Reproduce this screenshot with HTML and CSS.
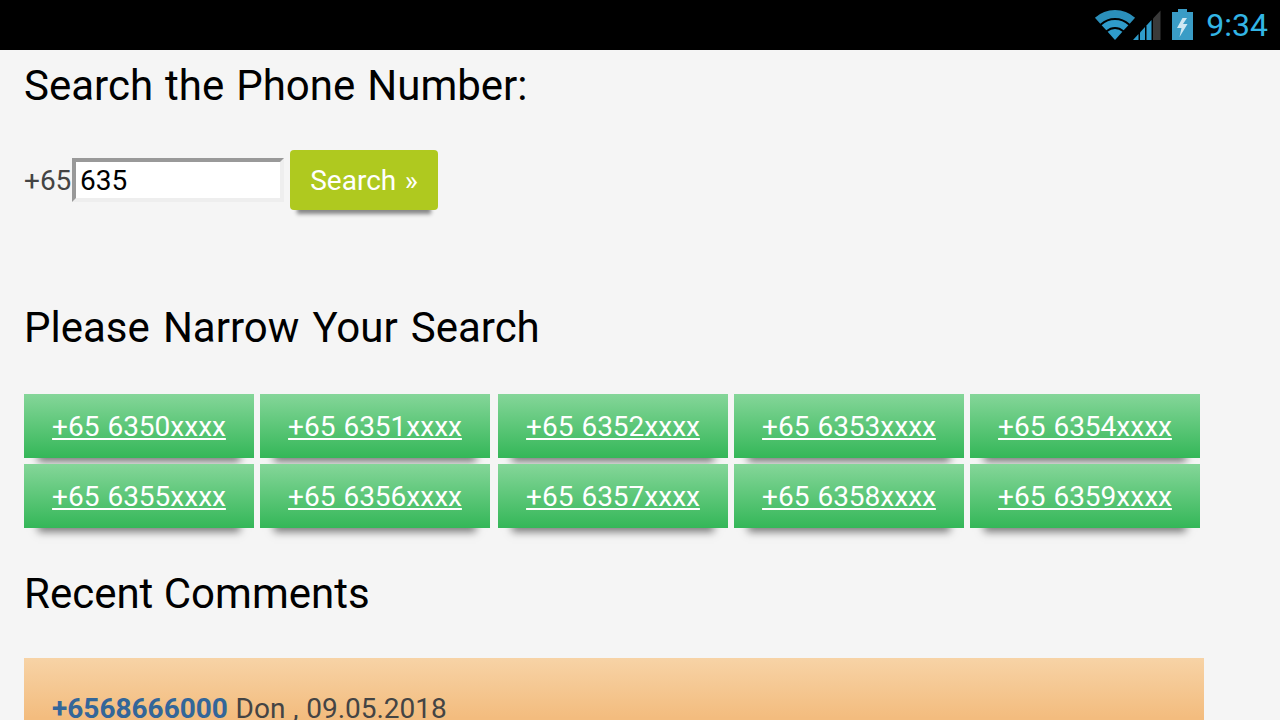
FILE: index.html
```html
<!DOCTYPE html>
<html>
<head>
  <meta charset="utf-8">
  <title>Search the Phone Number</title>
  <link rel="stylesheet" href="styles.css">
</head>
<body>

<!-- android status bar -->
<div class="status-bar">
  <svg class="icon-wifi" width="42" height="32" viewBox="0 0 42 32" fill="none">
    <path d="M21 31 L13.64 22.83 A11 11 0 0 1 28.36 22.83 Z" fill="#2f9ccb"/>
    <path d="M9.96 18.74 A16.5 16.5 0 0 1 32.04 18.74" stroke="#2f9ccb" stroke-width="7"/>
    <path d="M3.6 11.7 A26 26 0 0 1 38.4 11.7" stroke="#2b8fba" stroke-width="8"/>
  </svg>
  <svg class="icon-signal" width="28" height="32" viewBox="0 0 28 32">
    <path d="M0 31 L5.500 25 V31 Z" fill="#2f9ccb"/>
    <path d="M7 23.500 L12 18 V31 H7 Z" fill="#2f9ccb"/>
    <path d="M13.500 16.500 L18.500 11 V31 H13.500 Z" fill="#2f9ccb"/>
    <path d="M20 9.500 L27.500 1.500 V31 H20 Z" fill="#3a3a3a"/>
  </svg>
  <svg class="icon-battery" width="21" height="32" viewBox="0 0 21 32">
    <path d="M6 0 H15 V3 H21 V31 H0 V3 H6 Z" fill="#3a9cc6"/>
    <path d="M10.500 9 L5 19 H9.500 L7.500 28 L15.500 15 H11 L15 9 Z" fill="#cfe8f3"/>
  </svg>
  <span class="clock">9:34</span>
</div>

<div class="content">
  <h2 class="first">Search the Phone Number:</h2>

  <form class="search-form">
    <span class="prefix">+65</span>
    <input class="number-input" type="text" value="635">
    <a class="search-btn">Search »</a>
  </form>

  <h2 class="narrow-title">Please Narrow Your Search</h2>

  <div class="number-grid">
    <a class="number-btn" href="#">+65 6350xxxx</a>
    <a class="number-btn" href="#">+65 6351xxxx</a>
    <a class="number-btn wide-gap" href="#">+65 6352xxxx</a>
    <a class="number-btn" href="#">+65 6353xxxx</a>
    <a class="number-btn" href="#">+65 6354xxxx</a>
    <a class="number-btn" href="#">+65 6355xxxx</a>
    <a class="number-btn" href="#">+65 6356xxxx</a>
    <a class="number-btn wide-gap" href="#">+65 6357xxxx</a>
    <a class="number-btn" href="#">+65 6358xxxx</a>
    <a class="number-btn" href="#">+65 6359xxxx</a>
  </div>

  <h2 class="recent-title">Recent Comments</h2>

  <div class="comment-box">
    <a class="comment-number" href="#">+6568666000</a> Don , 09.05.2018
  </div>
</div>

</body>
</html>
```
FILE: styles.css
```css
html, body {
  margin: 0;
  height: 720px;
  overflow: hidden;
}

body {
  background-color: #f5f5f5;
  font-family: Roboto, sans-serif;
  color: #444444;
  word-spacing: 0.7px;
}

/* Status bar */
.status-bar {
  height: 50px;
  background-color: #000000;
  display: flex;
  align-items: center;
  justify-content: flex-end;
  padding-right: 12px;
}

.icon-wifi {
  margin-right: -3px;
}

.icon-signal {
  margin-right: 11px;
}

.icon-battery {
  margin-right: 13px;
}

.clock {
  font-size: 32px;
  color: #33b5e5;
}

/* Page content */
.content {
  padding: 0 24px;
}

h2 {
  margin: 0;
  font-size: 42px;
  font-weight: 400;
  line-height: 48px;
  color: #000000;
  word-spacing: 1.6px;
}

h2.first {
  padding-top: 12px;
}

.search-form {
  display: flex;
  align-items: center;
  margin-top: 40px;
  font-size: 28px;
}

.prefix {
  width: 48px;
  line-height: 44px;
  padding-top: 1px;
}

.number-input {
  box-sizing: border-box;
  width: 212px;
  height: 44px;
  padding: 1px 2px 0 4px;
  margin: 0;
  border: 4px solid;
  border-color: #999999 #eeeeee #eeeeee #999999;
  background-color: #ffffff;
  font-family: Roboto, sans-serif;
  font-size: 28px;
  color: #000000;
  outline: none;
}

.search-btn {
  margin-left: 6px;
  width: 148px;
  height: 60px;
  line-height: 62px;
  text-align: center;
  border-radius: 4px;
  background-color: #afc91f;
  color: #ffffff;
  word-spacing: 1.5px;
  box-shadow: 0 11px 4px -7px rgba(0, 0, 0, 0.45);
}

.narrow-title {
  margin-top: 94px;
  word-spacing: 2.7px;
}

.number-grid {
  display: flex;
  flex-wrap: wrap;
  gap: 6px;
  width: 1180px;
  margin-top: 42px;
}

.number-btn {
  width: 230px;
  height: 64px;
  line-height: 66px;
  text-align: center;
  font-size: 28px;
  word-spacing: 1px;
  color: #ffffff;
  background: linear-gradient(#85d699, #34b758);
  box-shadow: 0 18px 8px -14px rgba(0, 0, 0, 0.5);
}

.wide-gap {
  margin-left: 2px;
}

.recent-title {
  margin-top: 42px;
  word-spacing: 0;
}

.comment-box {
  width: 1180px;
  height: 200px;
  box-sizing: border-box;
  margin-top: 40px;
  padding: 34px 28px;
  font-size: 28px;
  line-height: 34px;
  background: linear-gradient(#f7d3a6, #f3bc7e 60px);
}

.comment-number {
  font-weight: bold;
  color: #336699;
  text-decoration: none;
}
```
